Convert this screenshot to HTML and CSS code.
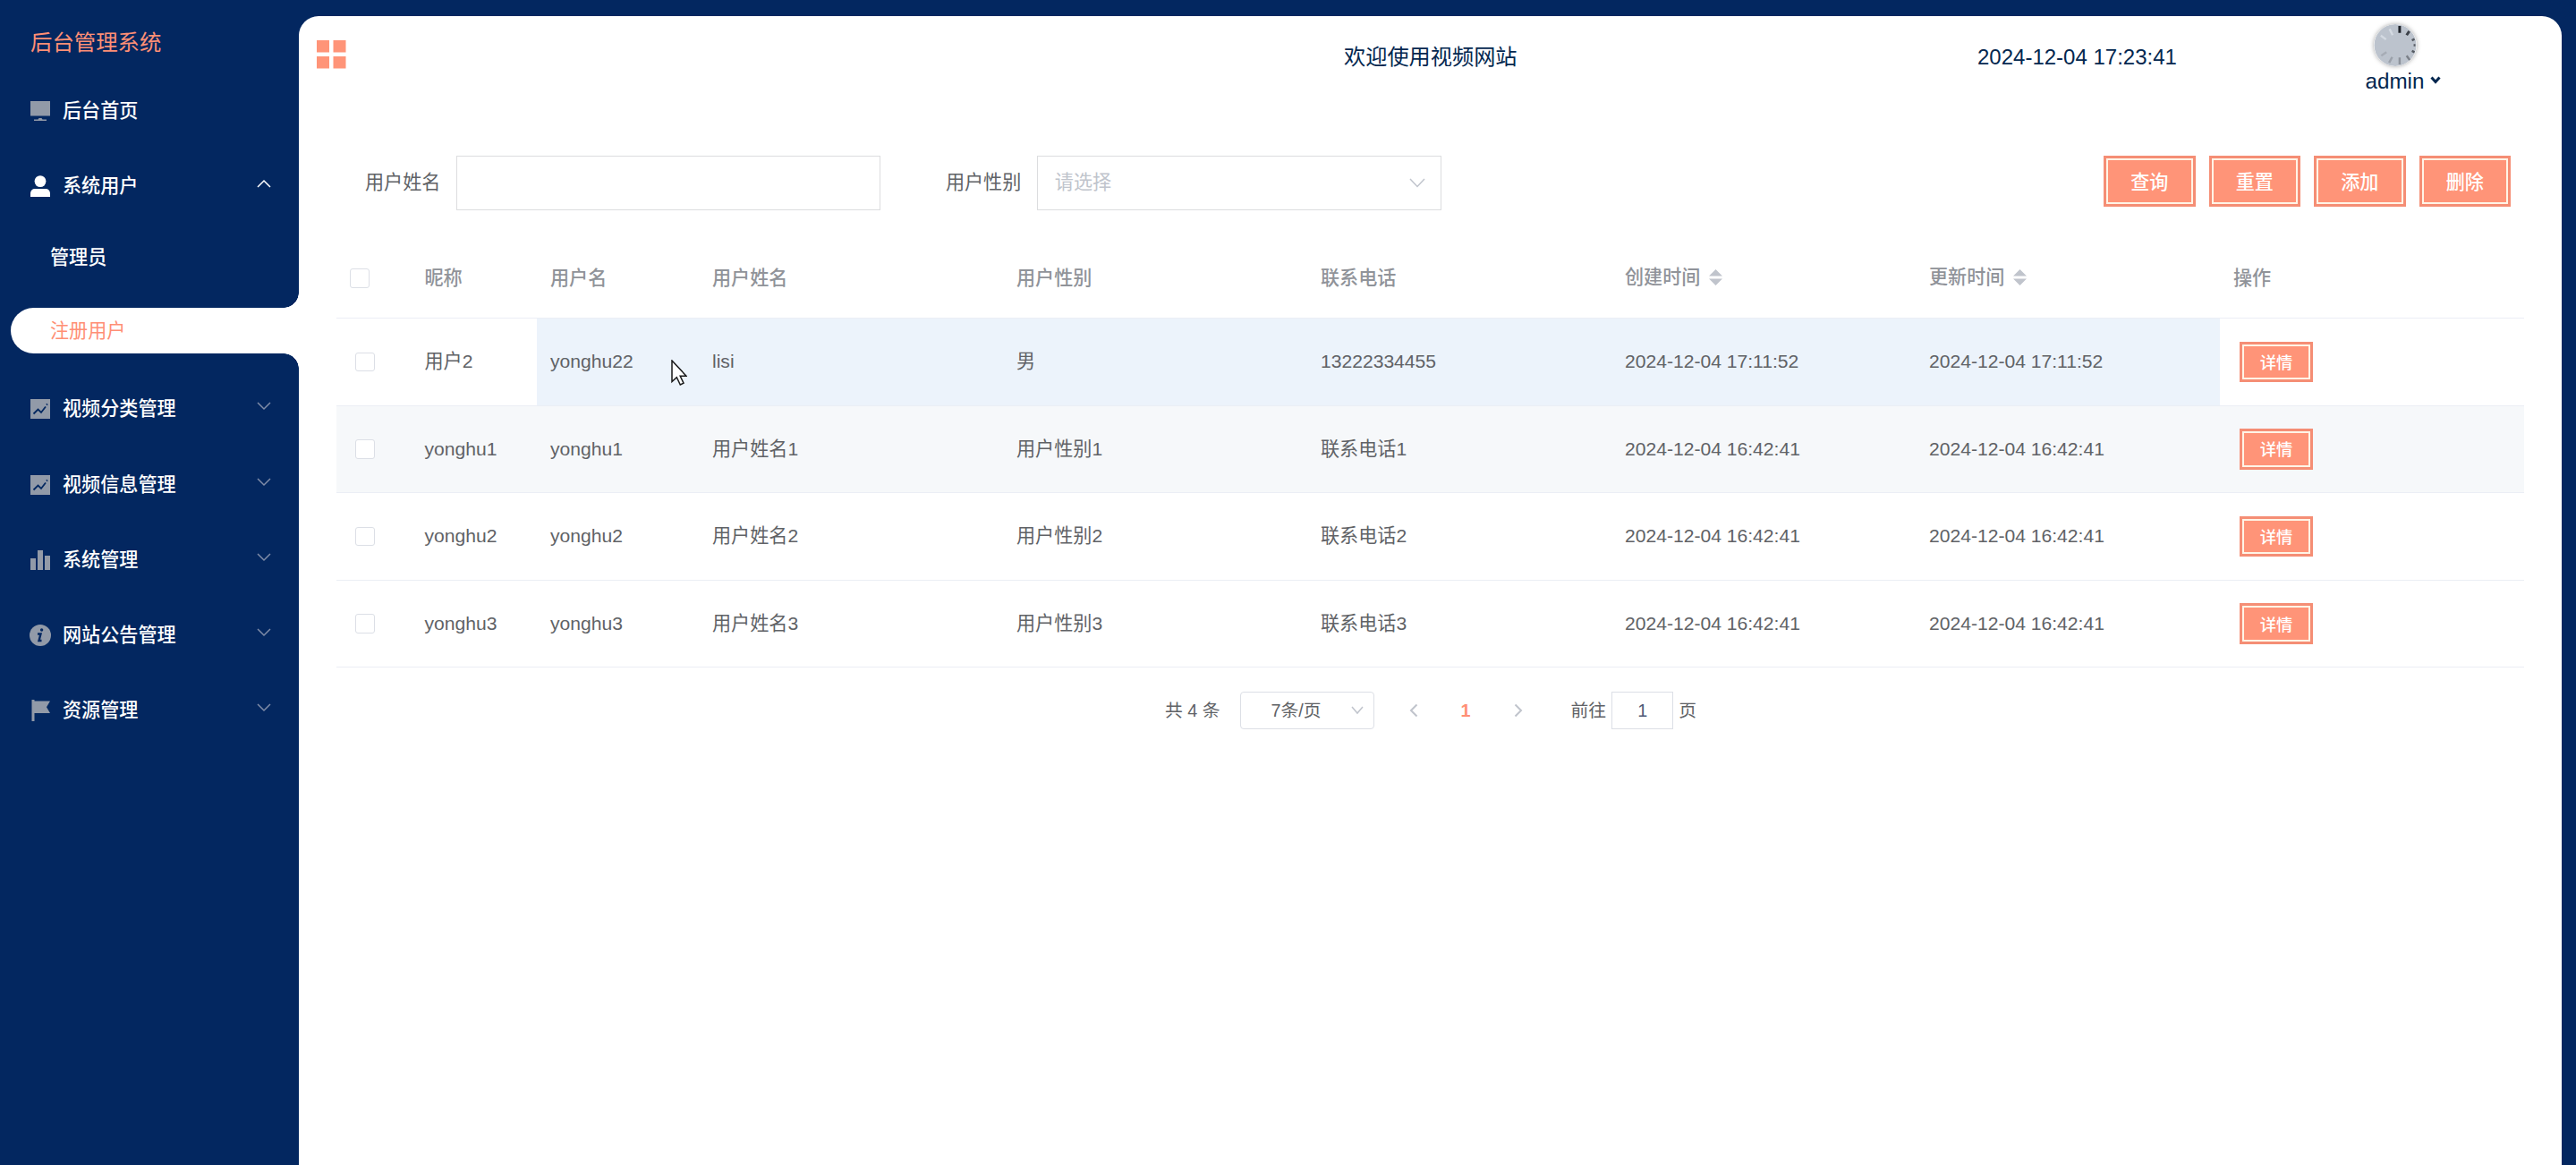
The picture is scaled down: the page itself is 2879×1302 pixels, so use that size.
FILE: index.html
```html
<!DOCTYPE html>
<html lang="zh-CN">
<head>
    <meta charset="UTF-8">
    <meta name="viewport" content="width=device-width, initial-scale=1.0">
    <title>后台管理系统</title>
    <link rel="stylesheet" href="styles.css">
</head>
<body>

<div class="app">
    <!-- Sidebar -->
    <aside class="sidebar">
        <h1 class="logo">后台管理系统</h1>
        <ul class="menu">
            <li class="menu-item">
                <svg class="menu-icon" viewBox="0 0 24 24"><path d="M1 1h22v16.500H1zM5 21.500h4.500l1-1.500h3l1 1.500H19V23H5z"/></svg>
                <span>后台首页</span>
            </li>
            <li class="menu-item open">
                <svg class="menu-icon" viewBox="0 0 24 24"><circle cx="12" cy="6.600" r="6.400"/><path d="M1 24v-3.500c0-3.500 2-5.500 5.500-5.500h11c3.500 0 5.500 2 5.500 5.500V24z"/></svg>
                <span>系统用户</span>
                <svg class="arrow" viewBox="0 0 16 10"><path d="M1 9l7-7 7 7"/></svg>
            </li>
            <li>
                <ul class="submenu">
                    <li class="submenu-item">管理员</li>
                    <li class="submenu-item active">注册用户</li>
                </ul>
            </li>
            <li class="menu-item">
                <svg class="menu-icon" viewBox="0 0 24 24"><path d="M1 1h22v22H1z"/><path class="icon-line" d="M4.500 17.500l5-5 3.500 3.500 5-6.500M19 7.500l1-1"/></svg>
                <span>视频分类管理</span>
                <svg class="arrow" viewBox="0 0 16 10"><path d="M1 1l7 7 7-7"/></svg>
            </li>
            <li class="menu-item">
                <svg class="menu-icon" viewBox="0 0 24 24"><path d="M1 1h22v22H1z"/><path class="icon-line" d="M4.500 17.500l5-5 3.500 3.500 5-6.500M19 7.500l1-1"/></svg>
                <span>视频信息管理</span>
                <svg class="arrow" viewBox="0 0 16 10"><path d="M1 1l7 7 7-7"/></svg>
            </li>
            <li class="menu-item">
                <svg class="menu-icon" viewBox="0 0 24 24"><path d="M1 10h6v13H1zM9 1h6v22H9zM17 7h6v16h-6z"/></svg>
                <span>系统管理</span>
                <svg class="arrow" viewBox="0 0 16 10"><path d="M1 1l7 7 7-7"/></svg>
            </li>
            <li class="menu-item">
                <svg class="menu-icon" viewBox="0 0 24 24"><circle cx="12" cy="12" r="12"/><circle class="icon-hole" cx="13.600" cy="6" r="1.700"/><path class="icon-line icon-info" d="M9 10.500h3.500l-2 7.500h3"/></svg>
                <span>网站公告管理</span>
                <svg class="arrow" viewBox="0 0 16 10"><path d="M1 1l7 7 7-7"/></svg>
            </li>
            <li class="menu-item">
                <svg class="menu-icon" viewBox="0 0 24 24"><path d="M2.500 0h3v24h-3zM5 1.500h18l-4 6.700 4 6.800H5z"/></svg>
                <span>资源管理</span>
                <svg class="arrow" viewBox="0 0 16 10"><path d="M1 1l7 7 7-7"/></svg>
            </li>
        </ul>
    </aside>

    <main class="main">
        <!-- Top bar -->
        <header class="topbar">
            <svg class="collapse" viewBox="0 0 33 32"><path d="M0 0h14v13.500H0zM18.500 0h14v13.500h-14zM0 18h14v13.500H0zM18.500 18h14v13.500h-14z"/></svg>
            <div class="welcome">欢迎使用视频网站</div>
            <div class="clock">2024-12-04 17:23:41</div>
            <div class="user">
                <svg class="avatar" viewBox="0 0 48 48">
                    <circle cx="24" cy="24" r="24" fill="#bcc3cd"/>
                    <g stroke-width="2.500" fill="none">
                        <path stroke="#1f2329" stroke-width="3" d="M29 2v8"/>
                        <path stroke="#3c4148" stroke-width="3" d="M40 8l-3 4.500"/>
                        <path stroke="#555a62" d="M46 17l-3 1.500M47 24h-2M46 32l-3-1.500"/>
                        <path stroke="#7b8089" d="M40.500 41l-3.500-5"/>
                        <path stroke="#8d929b" d="M29 46v-8"/>
                        <path stroke="#9ba1aa" d="M17 44l3.500-6.500"/>
                        <path stroke="#a6acb5" d="M8 36l6-4"/>
                        <path stroke="#d4dae2" d="M7.500 13l6 4.500M17.500 5.500l3.500 7"/>
                    </g>
                </svg>
                <div class="user-name">admin <svg class="caret" viewBox="0 0 12 9"><path d="M1.500 1.500L6 6.500l4.500-5"/></svg></div>
            </div>
        </header>

        <section class="content">
            <!-- Search form -->
            <div class="search">
                <label for="xingming">用户姓名</label>
                <input type="text" id="xingming" class="search-input">
                <label>用户性别</label>
                <div class="select">
                    <span>请选择</span>
                    <svg class="select-arrow" viewBox="0 0 18 11"><path d="M1 1l8 8.500L17 1"/></svg>
                </div>
                <div class="actions">
                    <button class="btn">查询</button>
                    <button class="btn">重置</button>
                    <button class="btn">添加</button>
                    <button class="btn">删除</button>
                </div>
            </div>

            <!-- User table -->
            <table class="table">
                <colgroup>
                    <col class="col-check"><col class="col-nick"><col class="col-account">
                    <col><col><col><col><col><col>
                </colgroup>
                <thead>
                    <tr>
                        <th><span class="checkbox"></span></th>
                        <th>昵称</th>
                        <th>用户名</th>
                        <th>用户姓名</th>
                        <th>用户性别</th>
                        <th>联系电话</th>
                        <th><div class="sortable">创建时间<svg class="sort" viewBox="0 0 15 18"><path d="M0 7.500L7.500 0 15 7.500zM0 10.500h15L7.500 18z"/></svg></div></th>
                        <th><div class="sortable">更新时间<svg class="sort" viewBox="0 0 15 18"><path d="M0 7.500L7.500 0 15 7.500zM0 10.500h15L7.500 18z"/></svg></div></th>
                        <th>操作</th>
                    </tr>
                </thead>
                <tbody>
                    <tr class="hover">
                        <td><span class="checkbox"></span></td>
                        <td>用户2</td>
                        <td>yonghu22</td>
                        <td>lisi</td>
                        <td>男</td>
                        <td>13222334455</td>
                        <td>2024-12-04 17:11:52</td>
                        <td>2024-12-04 17:11:52</td>
                        <td><button class="btn btn-small">详情</button></td>
                    </tr>
                    <tr class="striped">
                        <td><span class="checkbox"></span></td>
                        <td>yonghu1</td>
                        <td>yonghu1</td>
                        <td>用户姓名1</td>
                        <td>用户性别1</td>
                        <td>联系电话1</td>
                        <td>2024-12-04 16:42:41</td>
                        <td>2024-12-04 16:42:41</td>
                        <td><button class="btn btn-small">详情</button></td>
                    </tr>
                    <tr>
                        <td><span class="checkbox"></span></td>
                        <td>yonghu2</td>
                        <td>yonghu2</td>
                        <td>用户姓名2</td>
                        <td>用户性别2</td>
                        <td>联系电话2</td>
                        <td>2024-12-04 16:42:41</td>
                        <td>2024-12-04 16:42:41</td>
                        <td><button class="btn btn-small">详情</button></td>
                    </tr>
                    <tr>
                        <td><span class="checkbox"></span></td>
                        <td>yonghu3</td>
                        <td>yonghu3</td>
                        <td>用户姓名3</td>
                        <td>用户性别3</td>
                        <td>联系电话3</td>
                        <td>2024-12-04 16:42:41</td>
                        <td>2024-12-04 16:42:41</td>
                        <td><button class="btn btn-small">详情</button></td>
                    </tr>
                </tbody>
            </table>

            <!-- Pagination -->
            <div class="pagination">
                <span class="total">共 4 条</span>
                <div class="page-size">
                    <span>7条/页</span>
                    <svg class="size-arrow" viewBox="0 0 14 10"><path d="M1 1l6 7 6-7"/></svg>
                </div>
                <svg class="pager-arrow" viewBox="0 0 10 16"><path d="M8.500 1.500L2 8l6.500 6.500"/></svg>
                <span class="page-current">1</span>
                <svg class="pager-arrow" viewBox="0 0 10 16"><path d="M1.500 1.500L8 8l-6.500 6.500"/></svg>
                <span class="jump">前往</span>
                <input type="text" class="jump-input" value="1">
                <span>页</span>
            </div>
        </section>
    </main>
</div>

<!-- Mouse pointer -->
<svg class="cursor" viewBox="0 0 18 29"><path d="M1 1v23.500l5.300-4.800 4 8.300 3.700-1.800-3.800-8H17z"/></svg>

</body>
</html>
```

FILE: styles.css
```css
* {
    box-sizing: border-box;
}
body {
    margin: 0;
    background: #032760;
    font-family: "Liberation Sans", "Noto Sans CJK SC", sans-serif;
    font-size: 21.1px;
    line-height: 24px;
    color: #606266;
    overflow: hidden;
}
ul {
    list-style: none;
    margin: 0;
    padding: 0;
}
.app {
    display: flex;
    height: 1302px;
    padding: 17.5px 16px 0 0;
}

/* Sidebar */
.sidebar {
    width: 333.5px;
    flex: none;
    color: #fff;
}
.logo {
    margin: 0;
    padding-left: 34px;
    height: 64.5px;
    line-height: 59px;
    font-size: 24.4px;
    font-weight: normal;
    color: #ff8f75;
}
.menu-item {
    display: flex;
    align-items: center;
    height: 84.2px;
    padding: 0 31px 0 33px;
    font-weight: 500;
}
.menu-icon {
    width: 24px;
    height: 24px;
    margin-right: 13px;
    fill: #929aa8;
}
.menu-item.open .menu-icon {
    fill: #fff;
}
.icon-line {
    fill: none;
    stroke: #032760;
    stroke-width: 1.8;
}
.icon-info {
    stroke-width: 2.4;
}
.icon-hole {
    fill: #032760;
}
.arrow {
    width: 16px;
    height: 10px;
    margin-left: auto;
    margin-bottom: 6px;
    fill: none;
    stroke: #7f8ca8;
    stroke-width: 1.5;
}
.menu-item.open .arrow {
    stroke: #fff;
}
.submenu {
    padding: 11.5px 0 20px;
}
.submenu-item {
    height: 51.5px;
    line-height: 51px;
    margin-left: 12px;
    padding-left: 44px;
    font-weight: 500;
}
.submenu-item.active {
    position: relative;
    margin-top: 30.5px;
    border-radius: 26px 0 0 26px;
    background: #fff;
    color: #ff8f75;
    font-weight: normal;
}
/* concave corners joining the active item to the page */
.submenu-item.active::before,
.submenu-item.active::after {
    content: "";
    position: absolute;
    right: 0;
    width: 17px;
    height: 17px;
}
.submenu-item.active::before {
    bottom: 100%;
    background: radial-gradient(circle at 0 0, transparent 16.5px, #fff 17px);
}
.submenu-item.active::after {
    top: 100%;
    background: radial-gradient(circle at 0 100%, transparent 16.5px, #fff 17px);
}

/* Main panel */
.main {
    flex: 1;
    min-width: 0;
    background: #fff;
    border-radius: 22px 22px 0 0;
}
.topbar {
    display: flex;
    height: 110px;
    padding-left: 20.5px;
    font-size: 24.2px;
    line-height: 28px;
    color: #03274f;
}
.collapse {
    width: 33px;
    height: 32px;
    margin-top: 27.5px;
    fill: #ff9478;
}
.welcome {
    width: 708px;
    margin-left: 1115px;
    padding-top: 32px;
}
.clock {
    width: 389px;
    padding-top: 32px;
    font-size: 24px;
}
.user {
    width: 174px;
    display: flex;
    flex-direction: column;
    align-items: center;
    padding-top: 9.5px;
}
.avatar {
    width: 48px;
    height: 47px;
    margin-right: 18px;
    border-radius: 50%;
    box-shadow: 0 0 5px rgba(0, 0, 0, 0.35);
}
.user-name {
    display: flex;
    align-items: center;
    gap: 7px;
    padding-top: 3px;
}
.caret {
    width: 12px;
    height: 9px;
    margin-bottom: 3px;
    fill: none;
    stroke: #03274f;
    stroke-width: 3;
}
.content {
    padding: 46.5px 42px 0 42.5px;
}

/* Search form */
.search {
    display: flex;
    height: 95px;
    padding: 0 15px 0 32px;
    line-height: 60px;
}
.search-input,
.select {
    height: 60.5px;
    margin-left: 17.5px;
    border: 1.5px solid #dcdddf;
    background: #fff;
}
.search-input {
    width: 474px;
    margin-right: 73px;
    outline: none;
}
.select {
    width: 452px;
    display: flex;
    align-items: center;
    justify-content: space-between;
    padding: 0 17px 0 19px;
    color: #c0c4cc;
}
.select-arrow {
    width: 18px;
    height: 11px;
    fill: none;
    stroke: #c0c4cc;
    stroke-width: 1.5;
}
.actions {
    display: flex;
    gap: 15px;
    margin-left: auto;
}
.btn {
    width: 102.5px;
    height: 57px;
    padding: 0 0 2px;
    border: 3px solid #f58e75;
    background: #ff9478;
    box-shadow: inset 0 0 0 2px #fff4e6;
    font-family: inherit;
    font-size: 21.1px;
    font-weight: 500;
    color: #fff;
}
.btn-small {
    display: block;
    width: 82px;
    height: 45.5px;
    margin-left: 7px;
    padding-bottom: 1px;
    font-size: 18.3px;
}

/* Table */
.table {
    width: 2445px;
    table-layout: fixed;
    border-collapse: separate;
    border-spacing: 0;
}
.col-check {
    width: 83.5px;
}
.col-nick {
    width: 140.5px;
}
.col-account {
    width: 181px;
}
.table th,
.table td {
    padding: 0 15px;
    text-align: left;
    border-bottom: 1.5px solid #ebeef5;
}
.table th {
    height: 87px;
    padding-bottom: 2px;
    font-weight: 500;
    color: #909399;
}
.table td {
    height: 97.6px;
}
.table .hover td:nth-child(n+3):nth-child(-n+8) {
    background: #ecf3fb;
}
.table .striped td {
    background: #f6f8fa;
}
.checkbox {
    display: block;
    width: 21.5px;
    height: 21.5px;
    border: 1.5px solid #dcdfe6;
    border-radius: 3px;
    background: #fff;
}
td .checkbox {
    margin-left: 6px;
}
.sortable {
    display: flex;
    align-items: center;
    gap: 10px;
    margin-bottom: 2px;
}
.sort {
    width: 15px;
    height: 18px;
    fill: #c0c4cc;
}

/* Pagination */
.pagination {
    display: flex;
    align-items: center;
    height: 42px;
    margin: 27px 0 0 926px;
    font-size: 19.8px;
}
.page-size {
    display: flex;
    align-items: center;
    justify-content: space-between;
    width: 150px;
    height: 42px;
    margin: 0 39px 0 22px;
    padding: 0 11px 1px 34px;
    border: 1.5px solid #dcdfe6;
    border-radius: 4px;
}
.size-arrow {
    width: 14px;
    height: 10px;
    fill: none;
    stroke: #c0c4cc;
    stroke-width: 1.5;
}
.pager-arrow {
    width: 10px;
    height: 16px;
    fill: none;
    stroke: #c0c4cc;
    stroke-width: 2;
}
.page-current {
    width: 107px;
    text-align: center;
    font-weight: bold;
    color: #ff8f75;
}
.jump {
    margin-left: 54px;
}
.jump-input {
    width: 69px;
    height: 42px;
    margin: 0 6px;
    padding: 0;
    border: 1.5px solid #dcdfe6;
    text-align: center;
    font-family: inherit;
    font-size: 19.8px;
    color: #4c5875;
}

/* Mouse pointer */
.cursor {
    position: absolute;
    left: 750px;
    top: 402px;
    width: 18px;
    height: 29px;
    fill: #fff;
    stroke: #1a1a1a;
    stroke-width: 1.5;
}
```
